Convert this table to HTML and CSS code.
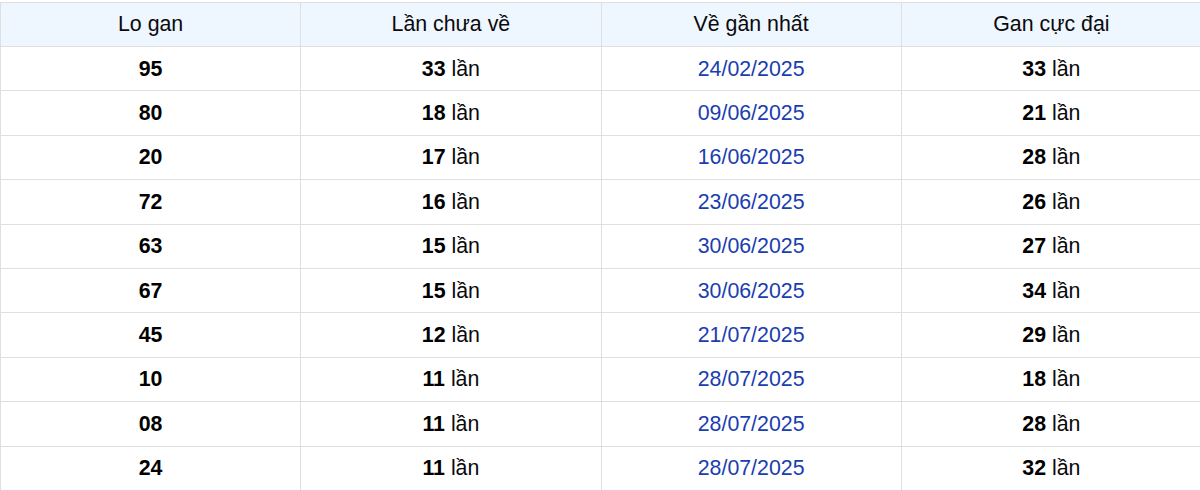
FILE: index.html
```html
<!DOCTYPE html>
<html lang="vi">
<head>
<meta charset="utf-8">
<title>Lo gan</title>
<link rel="stylesheet" href="styles.css">
</head>
<body>
<table class="gan-table">
  <thead>
    <tr><th>Lo gan</th><th>Lần chưa về</th><th>Về gần nhất</th><th>Gan cực đại</th></tr>
  </thead>
  <tbody>
    <tr><td><b>95</b></td><td><b>33</b> lần</td><td class="date">24/02/2025</td><td><b>33</b> lần</td></tr>
    <tr><td><b>80</b></td><td><b>18</b> lần</td><td class="date">09/06/2025</td><td><b>21</b> lần</td></tr>
    <tr><td><b>20</b></td><td><b>17</b> lần</td><td class="date">16/06/2025</td><td><b>28</b> lần</td></tr>
    <tr><td><b>72</b></td><td><b>16</b> lần</td><td class="date">23/06/2025</td><td><b>26</b> lần</td></tr>
    <tr><td><b>63</b></td><td><b>15</b> lần</td><td class="date">30/06/2025</td><td><b>27</b> lần</td></tr>
    <tr><td><b>67</b></td><td><b>15</b> lần</td><td class="date">30/06/2025</td><td><b>34</b> lần</td></tr>
    <tr><td><b>45</b></td><td><b>12</b> lần</td><td class="date">21/07/2025</td><td><b>29</b> lần</td></tr>
    <tr><td><b>10</b></td><td><b>11</b> lần</td><td class="date">28/07/2025</td><td><b>18</b> lần</td></tr>
    <tr><td><b>08</b></td><td><b>11</b> lần</td><td class="date">28/07/2025</td><td><b>28</b> lần</td></tr>
    <tr><td><b>24</b></td><td><b>11</b> lần</td><td class="date">28/07/2025</td><td><b>32</b> lần</td></tr>
  </tbody>
</table>
</body>
</html>
```
FILE: styles.css
```css
html, body {
  margin: 0;
  padding: 0;
  background: #ffffff;
  overflow: hidden;
}
body {
  padding-top: 2px;
  font-family: "Liberation Sans", Arial, sans-serif;
  color: #0a0a0a;
}
.gan-table {
  width: 1202px;
  border-collapse: collapse;
  table-layout: fixed;
  font-size: 21.33px;
}
.gan-table th,
.gan-table td {
  border: 1px solid #dfdfdf;
  text-align: center;
  line-height: 24.4px;
  padding: 9.5px 4px;
}
.gan-table th {
  font-weight: normal;
  background: #eef6ff;
  padding: 9.3px 4px;
}
.gan-table b {
  font-weight: bold;
  color: #000000;
}
.gan-table td.date {
  color: #1a3db0;
}
```
